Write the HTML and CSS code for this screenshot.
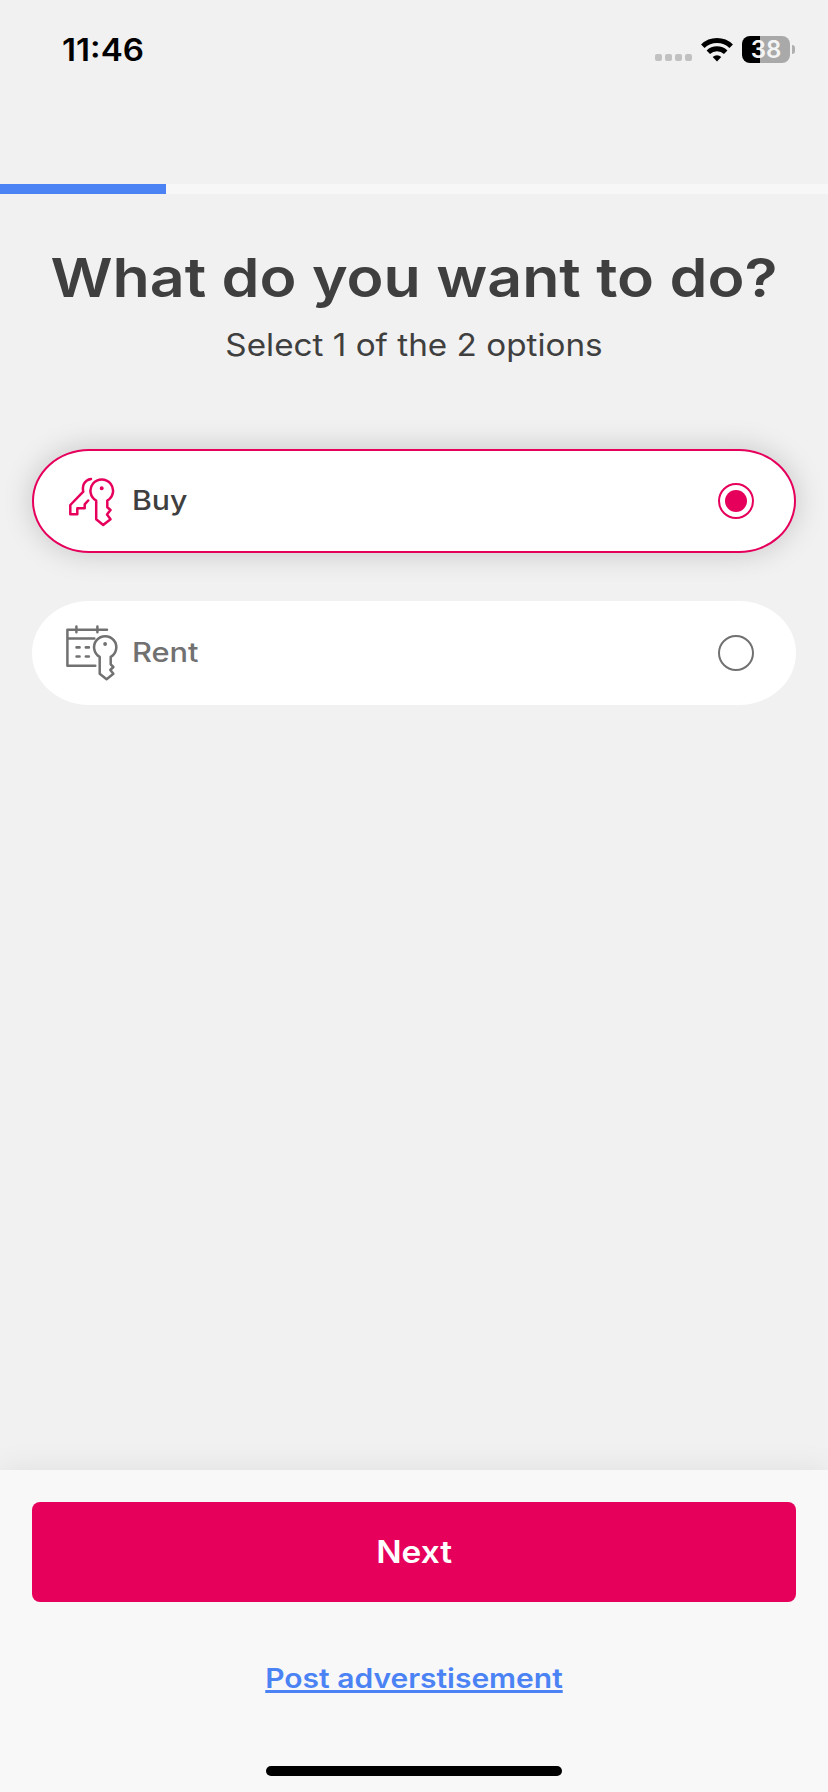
FILE: index.html
```html
<!DOCTYPE html>
<html lang="en">
<head>
<meta charset="utf-8">
<title>What do you want to do?</title>
<link rel="stylesheet" href="styles.css">
</head>
<body>
<div class="screen">
  <header class="status-bar">
    <span class="time">11:46</span>
    <div class="indicators">
      <div class="signal"><i></i><i></i><i></i><i></i></div>
      <svg class="wifi" width="32" height="25" viewBox="0 0 32 25" fill="none" stroke="#000" stroke-width="5">
        <path d="M1.8 9.2a20.5 20.5 0 0 1 28.4 0"/>
        <path d="M7.3 15.3a12.6 12.6 0 0 1 17.4 0"/>
        <path d="M16 24.4l-4.3-4.3a6.2 6.2 0 0 1 8.6 0z" fill="#000" stroke="none"/>
      </svg>
      <div class="battery"><span>38</span></div>
      <i class="battery-cap"></i>
    </div>
  </header>
  <div class="progress"><div class="progress-fill"></div></div>
  <main class="content">
    <h1 class="title">What do you want to do?</h1>
    <p class="subtitle">Select 1 of the 2 options</p>
    <div class="options">
      <div class="option selected">
        <svg class="icon" width="60" height="60" viewBox="0 0 60 60" fill="none" stroke="currentColor" stroke-width="2.5" stroke-linecap="round" stroke-linejoin="round">
          <path d="M32.2 29.6A11.3 11.3 0 1 1 43.3 29.6V36.300L46.500 39L43 43.600L46.500 48.300L39.200 54L32.200 48.300Z"/>
          <circle cx="37.700" cy="17.300" r="1.400" fill="currentColor" stroke-width="1.200"/>
          <path d="M27 8C20.500 9 17.800 14.500 19.300 20.700L6.300 34V43.200H13.300V37.300H20.700V33.300L24.200 29.500"/>
        </svg>
        <span class="label label-buy">Buy</span>
        <span class="radio"></span>
      </div>
      <div class="option">
        <svg class="icon" width="60" height="60" viewBox="0 0 60 60" fill="none" stroke="currentColor" stroke-width="2.500" stroke-linecap="round" stroke-linejoin="round">
          <path d="M43 6.700H3.400V42.700H31.300M3.400 15.400H30.300M12.400 3.500V9.300M33.400 3.500V9.300"/>
          <path d="M12.600 24.400H15.500M21.900 24.400H24.800M12.600 33.500H15.500M21.900 33.500H24.800" stroke-width="2.700"/>
          <path d="M35.700 33.900A11.100 11.100 0 1 1 46.700 33.900V41.300L49.400 44L46.300 47L49.400 50.800L42.600 56.200L35.700 50.800Z"/>
          <circle cx="41.100" cy="21" r="1.300" fill="currentColor" stroke-width="1.200"/>
        </svg>
        <span class="label label-rent">Rent</span>
        <span class="radio"></span>
      </div>
    </div>
  </main>
  <footer class="footer">
    <button class="next"><span>Next</span></button>
    <a class="post-link">Post adverstisement</a>
    <div class="home-indicator"></div>
  </footer>
</div>
</body>
</html>
```
FILE: styles.css
```css
* { box-sizing: border-box; }
body {
  margin: 0;
  background: #f1f1f1;
  font-family: Inter, sans-serif;
  color: #3f3f3f;
}
.screen {
  width: 828px;
  height: 1792px;
  display: flex;
  flex-direction: column;
  overflow: hidden;
}
.status-bar {
  height: 184px;
  flex: none;
  display: flex;
  align-items: flex-start;
  justify-content: space-between;
  padding: 29px 33px 0 62px;
}
.time {
  color: #000;
  font-size: 31px;
  font-weight: 600;
  line-height: 41px;
  transform: scaleX(1.07);
  transform-origin: left;
}
.indicators {
  display: flex;
  align-items: center;
  height: 41px;
}
.signal { display: flex; gap: 3px; margin: 15px 9px 0 0; }
.signal i { width: 7px; height: 7px; border-radius: 2px; background: #c1c1c1; }
.wifi { margin-right: 9px; }
.battery {
  width: 48px;
  height: 27px;
  border-radius: 8px;
  background: linear-gradient(90deg, #000 18px, #a9a9a9 18px);
  color: #f4f4f4;
  font-size: 24px;
  font-weight: 600;
  line-height: 27px;
  text-align: center;
}
.battery-cap {
  width: 3px;
  height: 9px;
  margin-left: 2px;
  border-radius: 0 4px 4px 0;
  background: #b0b0b0;
}
.progress { height: 10px; flex: none; background: #f7f7f7; }
.progress-fill { width: 166px; height: 10px; background: #4b83f5; }
.content { flex: 1; padding: 50px 32px 0; }
.title {
  margin: 0;
  font-size: 54px;
  font-weight: 600;
  line-height: 68px;
  text-align: center;
  white-space: nowrap;
  transform: scaleX(1.127);
}
.subtitle {
  margin: 13px 0 84px;
  font-size: 31px;
  line-height: 40px;
  text-align: center;
  transform: scaleX(1.073);
}
.options { display: flex; flex-direction: column; gap: 48px; }
.option {
  height: 104px;
  display: flex;
  align-items: center;
  justify-content: flex-start;
  padding: 0 42px 0 32px;
  border-radius: 57px / 52px;
  background: #fff;
  color: #717171;
}
.selected {
  padding: 0 40px 0 30px;
  border: 2px solid #e6005c;
  color: #e6005c;
  box-shadow: 0 0 30px rgba(0, 0, 0, 0.18);
}
.icon { flex: none; overflow: visible; }
.label {
  margin-left: 8px;
  font-size: 27px;
  font-weight: 500;
  line-height: 36px;
  transform-origin: left;
}
.label-buy { color: #3f3f3f; transform: scaleX(1.12); }
.label-rent { transform: scaleX(1.14); }
.radio {
  width: 36px;
  height: 36px;
  margin-left: auto;
  display: grid;
  place-items: center;
  border: 2px solid currentColor;
  border-radius: 50%;
}
.selected .radio::after {
  content: "";
  width: 22px;
  height: 22px;
  border-radius: 50%;
  background: currentColor;
}
.footer {
  height: 322px;
  flex: none;
  display: flex;
  flex-direction: column;
  align-items: center;
  padding: 32px 32px 16px;
  background: #f8f8f8;
  box-shadow: 0 0 30px rgba(0, 0, 0, 0.08);
}
.next {
  width: 100%;
  height: 100px;
  padding: 0;
  border: 0;
  border-radius: 8px;
  background: #e6005c;
  color: #fff;
  font: 600 31px/100px Inter, sans-serif;
}
.next span { display: inline-block; transform: scaleX(1.08); }
.post-link {
  margin-top: 57px;
  color: #4b83f5;
  font-size: 27px;
  font-weight: 600;
  line-height: 40px;
  text-decoration: underline;
  text-decoration-thickness: 3px;
  text-decoration-skip-ink: none;
  text-underline-offset: 2px;
  transform: scaleX(1.11);
}
.home-indicator {
  width: 296px;
  height: 10px;
  margin-top: auto;
  border-radius: 5px;
  background: #000;
}
```
